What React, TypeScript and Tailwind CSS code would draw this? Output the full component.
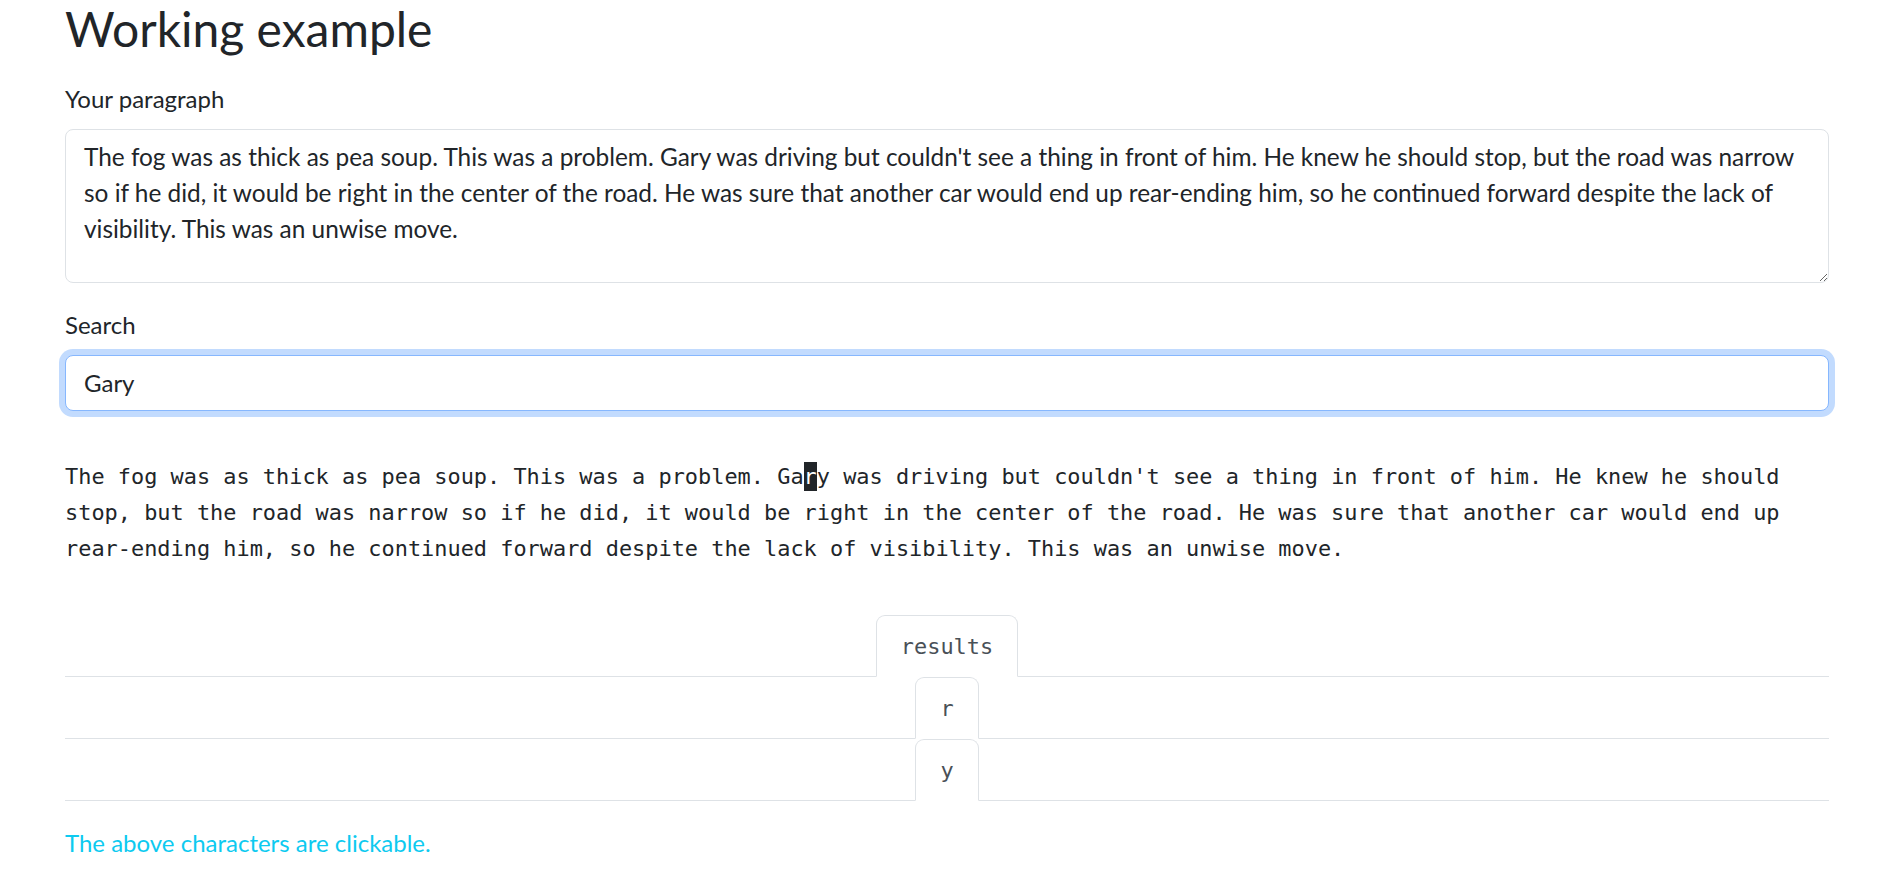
const PARAGRAPH =
  "The fog was as thick as pea soup. This was a problem. Gary was driving but couldn't see a thing in front of him. He knew he should stop, but the road was narrow so if he did, it would be right in the center of the road. He was sure that another car would end up rear-ending him, so he continued forward despite the lack of visibility. This was an unwise move.";

const SEARCH = "Gary";
const MARK_AT = PARAGRAPH.indexOf(SEARCH) + 2;

const RESULTS = ["results", "r", "y"];

const Tab = ({ label }: { label: string }) => (
  <div className="flex justify-center border-b border-[#dee2e6]">
    <button
      type="button"
      className="-mb-px rounded-t-[9px] border border-[#dee2e6] border-b-white bg-white px-6 pt-[13px] pb-[11px] font-['DejaVu_Sans_Mono',monospace] text-[21.92px] leading-[36px] text-[#495057]"
    >
      {label}
    </button>
  </div>
);

const App = () => {
  return (
    <div className="min-h-screen bg-white font-['Lato',sans-serif] text-[24px] leading-[36px] text-[#212529]">
      <div className="ml-[65px] w-[1764px]">
        <h2 className="mb-[23px] text-[48px] leading-[1.2] font-normal">Working example</h2>

        <label className="mb-3 block">Your paragraph</label>
        <textarea
          defaultValue={PARAGRAPH}
          className="mb-6 block h-[154px] w-full resize-y rounded-[8px] border border-[#dee2e6] bg-white px-[18px] py-[9px] text-[24.4px] leading-[36px] text-[#212529] outline-none"
        />

        <label className="mb-3 block">Search</label>
        <input
          type="text"
          defaultValue={SEARCH}
          className="block h-[56px] w-full rounded-[8px] border border-[#86b7fe] bg-white px-[18px] py-[9px] text-[24px] leading-[36px] text-[#212529] shadow-[0_0_0_6px_rgba(13,110,253,0.25)] outline-none"
        />

        <p className="mt-[48px] mb-[48px] font-['DejaVu_Sans_Mono',monospace] text-[21.92px] leading-[36px] text-[#212529]">
          {PARAGRAPH.slice(0, MARK_AT)}
          <span className="bg-[#212529] py-[2px] text-white">{PARAGRAPH[MARK_AT]}</span>
          {PARAGRAPH.slice(MARK_AT + 1)}
        </p>

        <div className="flex flex-col">
          {RESULTS.map((r) => (
            <Tab key={r} label={r} />
          ))}
        </div>

        <p className="mt-6 text-[#0dcaf0]">The above characters are clickable.</p>
      </div>
    </div>
  );
};

export default App;
